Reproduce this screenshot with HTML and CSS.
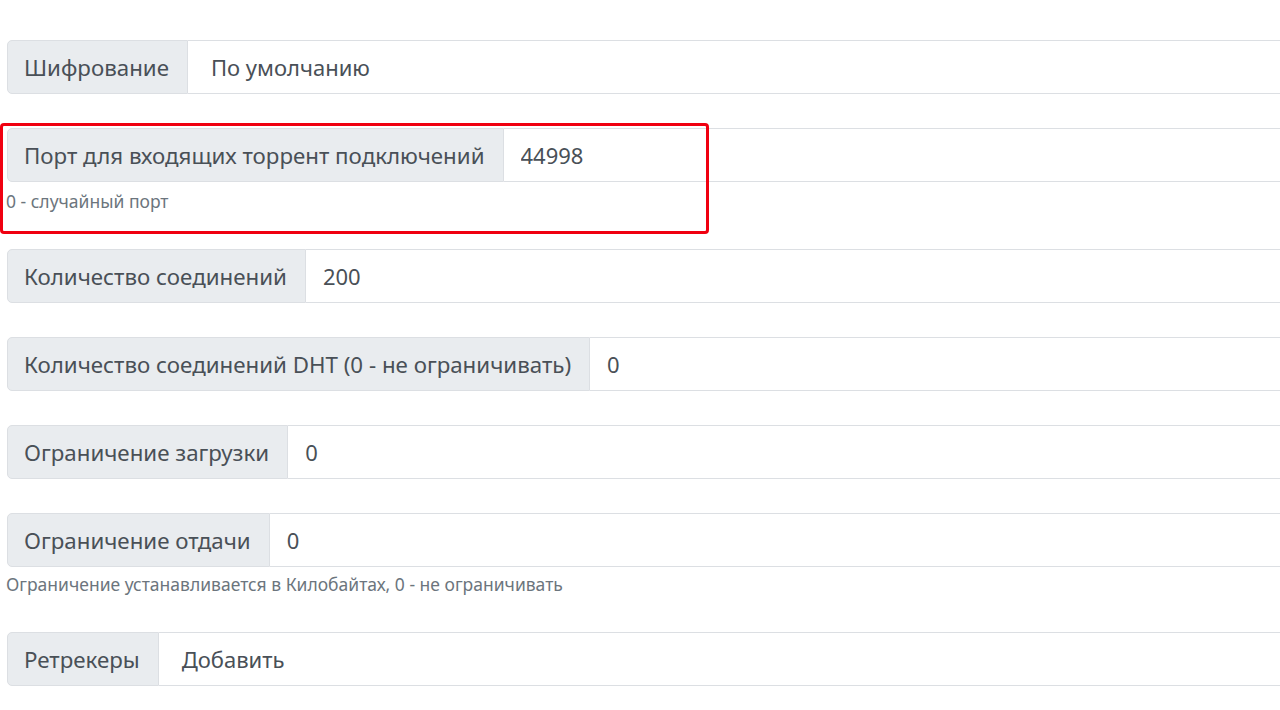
FILE: index.html
```html
<!DOCTYPE html>
<html lang="ru">
<head>
    <meta charset="UTF-8">
    <meta name="viewport" content="width=device-width, initial-scale=1.0">
    <title>Настройки</title>
    <link rel="stylesheet" href="styles.css">
</head>
<body>
    <div class="settings">
        <div class="input-group">
            <span class="group-label">Шифрование</span>
            <div class="group-control select">По умолчанию</div>
        </div>

        <div class="input-group">
            <span class="group-label">Порт для входящих торрент подключений</span>
            <input class="group-control" type="text" value="44998">
        </div>
        <p class="help">0 - случайный порт</p>

        <div class="input-group">
            <span class="group-label">Количество соединений</span>
            <input class="group-control" type="text" value="200">
        </div>

        <div class="input-group">
            <span class="group-label">Количество соединений DHT (0 - не ограничивать)</span>
            <input class="group-control" type="text" value="0">
        </div>

        <div class="input-group">
            <span class="group-label">Ограничение загрузки</span>
            <input class="group-control" type="text" value="0">
        </div>

        <div class="input-group">
            <span class="group-label">Ограничение отдачи</span>
            <input class="group-control" type="text" value="0">
        </div>
        <p class="help help-last">Ограничение устанавливается в Килобайтах, 0 - не ограничивать</p>

        <div class="input-group">
            <span class="group-label">Ретрекеры</span>
            <div class="group-control select">Добавить</div>
        </div>

        <!-- highlight around the port setting -->
        <div class="highlight"></div>
    </div>
</body>
</html>
```

FILE: styles.css
```css
body {
    margin: 0;
    font-family: 'Noto Sans', 'Open Sans', sans-serif;
    color: #495057;
    background: #ffffff;
    overflow: hidden;
}

.settings {
    position: relative;
    padding: 40px 0 0 7px;
}

.input-group {
    display: flex;
    width: 1320px;
    height: 54px;
    margin-bottom: 34px;
}

.group-label {
    display: flex;
    align-items: center;
    padding: 0 18px 0 16px;
    font-size: 22.3px;
    background-color: #e9ecef;
    border: 1px solid #dcdfe3;
    border-radius: 5px 0 0 5px;
    white-space: nowrap;
}

.group-control {
    flex: 1;
    display: flex;
    align-items: center;
    box-sizing: border-box;
    padding: 0 17px;
    font-family: inherit;
    font-size: 22px;
    color: #495057;
    background: #ffffff;
    border: 1px solid #dcdfe3;
    border-left: none;
    outline: none;
}

.select {
    padding-left: 23px;
}

.help {
    margin: -27px 0 36px -1px;
    font-size: 17.5px;
    line-height: 24px;
    color: #6c757d;
}

.help-last {
    margin-top: -29px;
}

.highlight {
    position: absolute;
    left: 0;
    top: 123px;
    width: 703px;
    height: 105px;
    border: 3px solid #f00010;
    border-radius: 4px;
}
```
